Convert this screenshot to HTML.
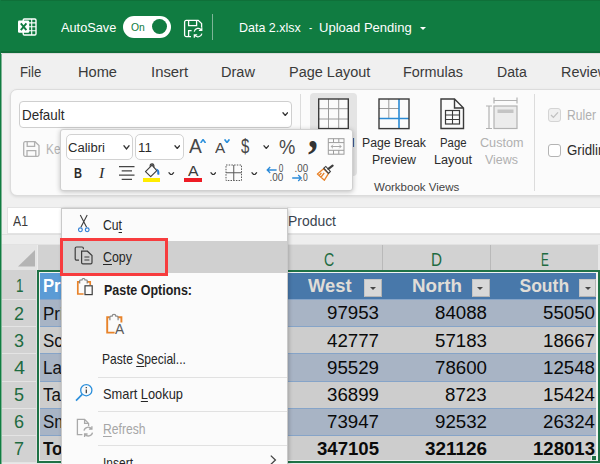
<!DOCTYPE html>
<html>
<head>
<meta charset="utf-8">
<title>Excel - Data 2.xlsx</title>
<style>
html,body{margin:0;padding:0;}
body{width:600px;height:464px;overflow:hidden;position:relative;background:#f0f0f0;font-family:"Liberation Sans",sans-serif;color:#333;}
.a{position:absolute;box-sizing:border-box;}
.t{position:absolute;white-space:nowrap;line-height:1;}
u{text-decoration-thickness:1px;text-underline-offset:1.5px;}
</style>
</head>
<body>
<div class="a" style="left:0px;top:0px;width:600px;height:52px;background:#107c41;"></div>
<div class="a" style="left:0px;top:0px;width:600px;height:1px;background:#0f7039;"></div>
<div class="a" style="left:0px;top:51px;width:600px;height:2px;background:#0f6d39;"></div>
<div class="a" style="left:0px;top:53px;width:600px;height:1px;background:#dcdcdc;"></div>
<div class="a" style="left:0px;top:0px;width:1px;height:464px;background:#107c41;"></div>
<div class="a" style="left:1px;top:54px;width:1px;height:410px;background:#7fb596;"></div>
<svg class="a" style="left:17px;top:17px" width="21" height="21" viewBox="0 0 21 21" fill="none"><rect x="6.200" y="2" width="12.800" height="16" rx="1.200" stroke="#fff" stroke-width="1.400"/>
<path d="M14.700 2 V18 M10 5.900 H19 M10 9.800 H19 M10 13.800 H19" stroke="#fff" stroke-width="1.100"/>
<rect x="1" y="3.600" width="11.200" height="12.200" rx="1.200" fill="#fff"/>
<path d="M3.800 6.400 L9.400 13.200 M9.400 6.400 L3.800 13.200" stroke="#107c41" stroke-width="1.900"/></svg>
<div class="t" style="left:60.70px;top:21px;font-size:13.50px;color:#fff;transform:scaleX(0.9446);transform-origin:0 0;">AutoSave</div>
<div class="a" style="left:122.7px;top:15.5px;width:48.3px;height:22.200000000000003px;background:#fff;border-radius:11.100px;"></div>
<div class="t" style="left:131.00px;top:22px;font-size:11.50px;color:#107c41;transform:scaleX(0.8996);transform-origin:0 0;">On</div>
<div class="a" style="left:151.6px;top:19.2px;width:15.200000000000017px;height:15.2px;background:#107c41;border-radius:50%;"></div>
<svg class="a" style="left:182.5px;top:19px" width="21" height="20" viewBox="0 0 21 20" fill="none"><g stroke="#fff" stroke-width="1.3"><path d="M8 17.6 H3.2 a1.6 1.6 0 0 1 -1.6 -1.6 V3 a1.6 1.6 0 0 1 1.6 -1.6 H15.2 l3.4 3.2 V8.5"/>
<path d="M5.6 1.6 V6.6 H13.6 V1.6"/><path d="M5.6 17.4 V11.6 H8.6"/>
<path d="M11.2 12.6 a4 4 0 0 1 7.3 -1.4 M18.8 8.6 v2.9 h-2.9" stroke-width="1.2"/>
<path d="M18.9 14.6 a4 4 0 0 1 -7.3 1.4 M11.3 18.8 v-2.9 h2.9" stroke-width="1.2"/></g></svg>
<div class="a" style="left:212px;top:13.5px;width:1px;height:26.0px;background:#7db598;"></div>
<div class="t" style="left:239.30px;top:21px;font-size:13.50px;color:#fff;transform:scaleX(0.9240);transform-origin:0 0;">Data 2.xlsx</div>
<div class="t" style="left:309.00px;top:21px;font-size:13.50px;color:#fff;transform:scaleX(0.7118);transform-origin:0 0;">-</div>
<div class="t" style="left:319.00px;top:21px;font-size:13.50px;color:#fff;transform:scaleX(0.9648);transform-origin:0 0;">Upload Pending</div>
<div class="a" style="left:420px;top:26.5px;border-left:3.6px solid transparent;border-right:3.6px solid transparent;border-top:3.8px solid #fff;"></div>
<div class="t" style="left:20.00px;top:64px;font-size:15.50px;color:#3a3a3a;transform:scaleX(0.8527);transform-origin:0 0;">File</div>
<div class="t" style="left:78.30px;top:64px;font-size:15.50px;color:#3a3a3a;transform:scaleX(0.9433);transform-origin:0 0;">Home</div>
<div class="t" style="left:150.80px;top:64px;font-size:15.50px;color:#3a3a3a;transform:scaleX(0.9596);transform-origin:0 0;">Insert</div>
<div class="t" style="left:221.00px;top:64px;font-size:15.50px;color:#3a3a3a;transform:scaleX(0.9388);transform-origin:0 0;">Draw</div>
<div class="t" style="left:288.70px;top:64px;font-size:15.50px;color:#3a3a3a;transform:scaleX(0.9340);transform-origin:0 0;">Page Layout</div>
<div class="t" style="left:403.30px;top:64px;font-size:15.50px;color:#3a3a3a;transform:scaleX(0.9288);transform-origin:0 0;">Formulas</div>
<div class="t" style="left:497.30px;top:64px;font-size:15.50px;color:#3a3a3a;transform:scaleX(0.9070);transform-origin:0 0;">Data</div>
<div class="t" style="left:561.30px;top:64px;font-size:15.50px;color:#3a3a3a;transform:scaleX(0.9280);transform-origin:0 0;">Review</div>
<div class="a" style="left:10px;top:89px;width:630px;height:107px;background:#fbfbfb;border:1px solid #dcdcdc;border-radius:7px;box-shadow:0 1px 3px rgba(0,0,0,.10);"></div>
<div class="a" style="left:19px;top:101px;width:272.5px;height:26.5px;background:#fff;border:1px solid #cfcfcf;border-radius:4px;"></div>
<div class="t" style="left:22.00px;top:108px;font-size:14.20px;color:#2a2a2a;transform:scaleX(0.9446);transform-origin:0 0;">Default</div>
<svg class="a" style="left:281.5px;top:112px" width="6.5" height="4" viewBox="0 0 6.5 4" fill="none"><path d="M0.6 0.4 L3.25 3.4 L5.9 0.4" stroke="#333" stroke-width="1.4"/></svg>
<svg class="a" style="left:22px;top:140px" width="19" height="18" viewBox="0 0 19 18" fill="none"><g stroke="#b0b0b0" stroke-width="1.3"><path d="M1.7 3.2 a1.5 1.5 0 0 1 1.5 -1.5 H13 L17 5.6 V14.8 a1.5 1.5 0 0 1 -1.5 1.5 H3.2 a1.5 1.5 0 0 1 -1.5 -1.5 Z"/>
<path d="M5.2 1.7 V6.4 H12.6 V1.7 M5 16.3 V10.6 H13.8 V16.3"/></g></svg>
<div class="t" style="left:45.50px;top:142px;font-size:14.20px;color:#b4b4b4;transform:scaleX(0.8349);transform-origin:0 0;">Ke</div>
<div class="a" style="left:300px;top:94px;width:1px;height:97px;background:#dcdcdc;"></div>
<div class="a" style="left:309.5px;top:93px;width:47.5px;height:83px;background:#e4e4e4;border-radius:4px;"></div>
<svg class="a" style="left:317px;top:97px" width="33" height="33" viewBox="0 0 33 33" fill="none"><rect x="1.7" y="2" width="29.6" height="29.6" fill="#fbfbfb"/><path d="M11.5 2 V31 M21.7 2 V31 M2 11.7 H31 M2 22 H31" stroke="#9a9a9a" stroke-width="1"/>
<rect x="1.7" y="2" width="29.6" height="29.6" stroke="#3b3b3b" stroke-width="1.4"/></svg>
<div class="t" style="left:312.50px;top:136px;font-size:13.25px;color:#2b2b2b;transform:scaleX(0.9719);transform-origin:0 0;">Normal</div>
<svg class="a" style="left:377px;top:97px" width="34" height="33" viewBox="0 0 34 33" fill="none"><path d="M11.8 2 V21.5 M2 11.5 H22" stroke="#9a9a9a" stroke-width="1"/>
<path d="M22 2 V31.5 M2 21.5 H32" stroke="#2a8ad4" stroke-width="1.6"/>
<rect x="2" y="2" width="30" height="29.6" stroke="#3b3b3b" stroke-width="1.4"/></svg>
<div class="t" style="left:361.50px;top:136px;font-size:13.25px;color:#2b2b2b;transform:scaleX(0.9241);transform-origin:0 0;">Page Break</div>
<div class="t" style="left:371.50px;top:153px;font-size:13.25px;color:#2b2b2b;transform:scaleX(0.9329);transform-origin:0 0;">Preview</div>
<svg class="a" style="left:439px;top:97px" width="27" height="33" viewBox="0 0 27 33" fill="none"><path d="M2 2 H15.5 L24.5 11 V31.5 H2 Z M15.5 2 V11 H24.5" stroke="#3b3b3b" stroke-width="1.4"/>
<rect x="6.5" y="13.5" width="14" height="13.5" stroke="#3b3b3b" stroke-width="1.2"/><path d="M6.5 18 H20.5 M6.5 22.5 H20.5 M13.5 13.5 V27" stroke="#3b3b3b" stroke-width="1.1"/></svg>
<div class="t" style="left:439.50px;top:136px;font-size:13.25px;color:#2b2b2b;transform:scaleX(0.8563);transform-origin:0 0;">Page</div>
<div class="t" style="left:434.00px;top:153px;font-size:13.25px;color:#2b2b2b;transform:scaleX(0.9552);transform-origin:0 0;">Layout</div>
<svg class="a" style="left:485px;top:96px" width="34" height="34" viewBox="0 0 34 34" fill="none"><g stroke="#b2b2b2" stroke-width="1.2"><path d="M9 1.5 V7.5 M32 1.5 V7.5 M9 4.5 H32 M1 10 H7 M1 32.5 H7 M4 10 V32.5"/>
<rect x="9" y="10" width="23" height="22.5" fill="#ececec"/></g><rect x="12.5" y="13.5" width="16" height="3.5" fill="#c4c4c4"/></svg>
<div class="t" style="left:479.50px;top:136px;font-size:13.25px;color:#b0b0b0;transform:scaleX(0.9528);transform-origin:0 0;">Custom</div>
<div class="t" style="left:485.00px;top:153px;font-size:13.25px;color:#b0b0b0;transform:scaleX(0.9400);transform-origin:0 0;">Views</div>
<div class="t" style="left:374.00px;top:182px;font-size:11.50px;color:#444;">Workbook Views</div>
<div class="a" style="left:534px;top:94px;width:1px;height:97px;background:#dcdcdc;"></div>
<div class="a" style="left:547.5px;top:108px;width:13.5px;height:13.5px;background:#f0f0f0;border:1px solid #d4d4d4;border-radius:3px;"></div>
<svg class="a" style="left:550px;top:111px" width="9" height="8" viewBox="0 0 9 8" fill="none"><path d="M1 4 L3.4 6.4 L8 1.4" stroke="#c0c0c0" stroke-width="1.3"/></svg>
<div class="t" style="left:567.00px;top:108px;font-size:14.20px;color:#b0b0b0;transform:scaleX(0.8547);transform-origin:0 0;">Ruler</div>
<div class="a" style="left:547.5px;top:143.5px;width:13.5px;height:13.0px;background:#fff;border:1px solid #b4b4b4;border-radius:3px;"></div>
<div class="t" style="left:567.00px;top:143px;font-size:14.20px;color:#2b2b2b;transform:scaleX(0.9369);transform-origin:0 0;">Gridlines</div>
<div class="a" style="left:7px;top:207px;width:263px;height:27px;background:#fff;border:1px solid #e3e3e3;"></div>
<div class="a" style="left:287px;top:207px;width:323px;height:27px;background:#fff;border:1px solid #e3e3e3;"></div>
<div class="t" style="left:13.00px;top:214px;font-size:14.20px;color:#3a3a3a;transform:scaleX(0.8637);transform-origin:0 0;">A1</div>
<div class="t" style="left:288.00px;top:214px;font-size:14.20px;color:#3a4450;transform:scaleX(0.9808);transform-origin:0 0;">Product</div>
<div class="a" style="left:2px;top:234px;width:598px;height:11px;background:#eeeeee;"></div>
<div class="a" style="left:2px;top:234px;width:598px;height:1px;background:#e0e0e0;"></div>
<div class="a" style="left:2px;top:244px;width:598px;height:1px;background:#e2e2e2;"></div>
<div class="a" style="left:2px;top:245px;width:598px;height:26px;background:#e4e4e4;"></div>
<svg class="a" style="left:17px;top:249px" width="19" height="18" viewBox="0 0 19 18" fill="none"><path d="M18 1 V17.500 H1 Z" fill="#b4b4b4"/></svg>
<div class="a" style="left:38px;top:245px;width:560px;height:25px;background:#d2d2d2;"></div>
<div class="a" style="left:37px;top:245px;width:1px;height:25px;background:#ececec;"></div>
<div class="a" style="left:598px;top:245px;width:2px;height:25px;background:#e8e8e8;"></div>
<div class="a" style="left:168.5px;top:245px;width:1.0px;height:25px;background:#b9b9b9;"></div>
<div class="a" style="left:275.5px;top:245px;width:1.0px;height:25px;background:#b9b9b9;"></div>
<div class="a" style="left:382.0px;top:245px;width:1.0px;height:25px;background:#b9b9b9;"></div>
<div class="a" style="left:489.5px;top:245px;width:1.0px;height:25px;background:#b9b9b9;"></div>
<div class="t" style="left:324.30px;top:252px;font-size:17.50px;color:#1e6b41;transform:scaleX(0.8073);transform-origin:0 0;">C</div>
<div class="t" style="left:431.00px;top:252px;font-size:17.50px;color:#1e6b41;transform:scaleX(0.8706);transform-origin:0 0;">D</div>
<div class="t" style="left:540.80px;top:252px;font-size:17.50px;color:#1e6b41;transform:scaleX(0.6682);transform-origin:0 0;">E</div>
<div class="a" style="left:2px;top:270px;width:35px;height:194px;background:#d2d2d2;"></div>
<div class="a" style="left:2px;top:298.5px;width:35px;height:1.0px;background:#e4e4e4;"></div>
<div class="a" style="left:2px;top:326.0px;width:35px;height:1.0px;background:#e4e4e4;"></div>
<div class="a" style="left:2px;top:353.0px;width:35px;height:1.0px;background:#e4e4e4;"></div>
<div class="a" style="left:2px;top:380.5px;width:35px;height:1.0px;background:#e4e4e4;"></div>
<div class="a" style="left:2px;top:407.5px;width:35px;height:1.0px;background:#e4e4e4;"></div>
<div class="a" style="left:2px;top:434.5px;width:35px;height:1.0px;background:#e4e4e4;"></div>
<div class="a" style="left:2px;top:461.5px;width:35px;height:1.0px;background:#e4e4e4;"></div>
<div class="a" style="left:36px;top:270px;width:1px;height:194px;background:#e0e0e0;"></div>
<div class="t" style="left:15.70px;top:278px;font-size:17.50px;color:#1e6b41;transform:scaleX(0.7708);transform-origin:0 0;">1</div>
<div class="t" style="left:14.00px;top:306px;font-size:17.50px;color:#1e6b41;transform:scaleX(1.0277);transform-origin:0 0;">2</div>
<div class="t" style="left:14.00px;top:333px;font-size:17.50px;color:#1e6b41;transform:scaleX(1.0277);transform-origin:0 0;">3</div>
<div class="t" style="left:13.50px;top:360px;font-size:17.50px;color:#1e6b41;transform:scaleX(1.1305);transform-origin:0 0;">4</div>
<div class="t" style="left:14.00px;top:387px;font-size:17.50px;color:#1e6b41;transform:scaleX(1.0277);transform-origin:0 0;">5</div>
<div class="t" style="left:14.00px;top:414px;font-size:17.50px;color:#1e6b41;transform:scaleX(1.0277);transform-origin:0 0;">6</div>
<div class="t" style="left:14.00px;top:441px;font-size:17.50px;color:#1e6b41;transform:scaleX(1.0277);transform-origin:0 0;">7</div>
<div class="a" style="left:39px;top:272px;width:558.5px;height:189px;background:#f2f2f2;"></div>
<div class="a" style="left:40px;top:273px;width:556px;height:26px;background:#4878aa;"></div>
<div class="a" style="left:40px;top:299px;width:556px;height:27.5px;background:#a8b4c5;"></div>
<div class="a" style="left:40px;top:326.5px;width:556px;height:27.0px;background:#cdcdcd;"></div>
<div class="a" style="left:40px;top:353.5px;width:556px;height:27.5px;background:#a8b4c5;"></div>
<div class="a" style="left:40px;top:381px;width:556px;height:27px;background:#cdcdcd;"></div>
<div class="a" style="left:40px;top:408px;width:556px;height:27px;background:#a8b4c5;"></div>
<div class="a" style="left:40px;top:435px;width:556px;height:25px;background:#cdcdcd;"></div>
<div class="a" style="left:40px;top:298.5px;width:556px;height:1.0px;background:#86a4c8;"></div>
<div class="a" style="left:40px;top:326.0px;width:556px;height:1.0px;background:#86a4c8;"></div>
<div class="a" style="left:40px;top:353.0px;width:556px;height:1.0px;background:#86a4c8;"></div>
<div class="a" style="left:40px;top:380.5px;width:556px;height:1.0px;background:#86a4c8;"></div>
<div class="a" style="left:40px;top:407.5px;width:556px;height:1.0px;background:#86a4c8;"></div>
<div class="a" style="left:40px;top:434.5px;width:556px;height:1.0px;background:#86a4c8;"></div>
<div class="a" style="left:37px;top:270px;width:562.5px;height:2px;background:#1f7246;"></div>
<div class="a" style="left:37px;top:270px;width:2px;height:194px;background:#1f7246;"></div>
<div class="a" style="left:597.5px;top:270px;width:2.0px;height:193px;background:#1f7246;"></div>
<div class="a" style="left:37px;top:460.6px;width:562.5px;height:2.3999999999999773px;background:#1f7246;"></div>
<div class="a" style="left:2px;top:463px;width:598px;height:1px;background:#e8e8e8;"></div>
<div class="a" style="left:590.5px;top:455px;width:6.0px;height:5.600000000000023px;background:#1f7246;border:1px solid #eee;"></div>
<div class="a" style="left:40px;top:273px;width:129px;height:26px;background:#5b9bd5;"></div>
<div class="t" style="left:43.00px;top:278px;font-size:17.50px;color:#fff;font-weight:bold;transform:scaleX(0.9500);transform-origin:0 0;">Product</div>
<div class="t" style="left:42.60px;top:306px;font-size:17.50px;color:#111;transform:scaleX(0.9700);transform-origin:0 0;">Printer</div>
<div class="t" style="left:42.60px;top:333px;font-size:17.50px;color:#111;transform:scaleX(0.9700);transform-origin:0 0;">Scanner</div>
<div class="t" style="left:42.60px;top:360px;font-size:17.50px;color:#111;transform:scaleX(0.9700);transform-origin:0 0;">Laptop</div>
<div class="t" style="left:42.60px;top:387px;font-size:17.50px;color:#111;transform:scaleX(0.9700);transform-origin:0 0;">Tablet</div>
<div class="t" style="left:42.60px;top:414px;font-size:17.50px;color:#111;transform:scaleX(0.9700);transform-origin:0 0;">Smartphone</div>
<div class="t" style="left:42.60px;top:441px;font-size:17.50px;color:#111;font-weight:bold;transform:scaleX(0.9700);transform-origin:0 0;">Total</div>
<div class="t" style="left:308.00px;top:278px;font-size:17.50px;color:#e0ddd7;font-weight:bold;transform:scaleX(1.0484);transform-origin:0 0;">West</div>
<div class="t" style="left:411.50px;top:278px;font-size:17.50px;color:#e0ddd7;font-weight:bold;transform:scaleX(1.0717);transform-origin:0 0;">North</div>
<div class="t" style="left:519.50px;top:278px;font-size:17.50px;color:#e0ddd7;font-weight:bold;">South</div>
<div class="a" style="left:364px;top:279px;width:18px;height:18px;background:#d8d8d8;border:1px solid #b4b4b4;border-left-color:#c6c6c6;border-top-color:#c6c6c6;"></div>
<div class="a" style="left:369.5px;top:287px;border-left:3.5px solid transparent;border-right:3.5px solid transparent;border-top:3.800px solid #474747;"></div>
<div class="a" style="left:471.5px;top:279px;width:18.0px;height:18px;background:#d8d8d8;border:1px solid #b4b4b4;border-left-color:#c6c6c6;border-top-color:#c6c6c6;"></div>
<div class="a" style="left:477.0px;top:287px;border-left:3.5px solid transparent;border-right:3.5px solid transparent;border-top:3.800px solid #474747;"></div>
<div class="a" style="left:579px;top:279px;width:17px;height:18px;background:#d8d8d8;border:1px solid #b4b4b4;border-left-color:#c6c6c6;border-top-color:#c6c6c6;"></div>
<div class="a" style="left:584.5px;top:287px;border-left:3.5px solid transparent;border-right:3.5px solid transparent;border-top:3.800px solid #474747;"></div>
<div class="t" style="left:327.00px;top:305px;font-size:17.50px;color:#0a0a0a;transform:scaleX(1.0685);transform-origin:0 0;">97953</div>
<div class="t" style="left:434.80px;top:305px;font-size:17.50px;color:#0a0a0a;transform:scaleX(1.0685);transform-origin:0 0;">84088</div>
<div class="t" style="left:542.50px;top:305px;font-size:17.50px;color:#0a0a0a;transform:scaleX(1.0685);transform-origin:0 0;">55050</div>
<div class="t" style="left:327.00px;top:333px;font-size:17.50px;color:#0a0a0a;transform:scaleX(1.0685);transform-origin:0 0;">42777</div>
<div class="t" style="left:434.80px;top:333px;font-size:17.50px;color:#0a0a0a;transform:scaleX(1.0685);transform-origin:0 0;">57183</div>
<div class="t" style="left:542.50px;top:333px;font-size:17.50px;color:#0a0a0a;transform:scaleX(1.0685);transform-origin:0 0;">18667</div>
<div class="t" style="left:327.00px;top:360px;font-size:17.50px;color:#0a0a0a;transform:scaleX(1.0685);transform-origin:0 0;">95529</div>
<div class="t" style="left:434.80px;top:360px;font-size:17.50px;color:#0a0a0a;transform:scaleX(1.0685);transform-origin:0 0;">78600</div>
<div class="t" style="left:542.50px;top:360px;font-size:17.50px;color:#0a0a0a;transform:scaleX(1.0685);transform-origin:0 0;">12548</div>
<div class="t" style="left:327.00px;top:387px;font-size:17.50px;color:#0a0a0a;transform:scaleX(1.0685);transform-origin:0 0;">36899</div>
<div class="t" style="left:445.30px;top:387px;font-size:17.50px;color:#0a0a0a;transform:scaleX(1.0661);transform-origin:0 0;">8723</div>
<div class="t" style="left:542.50px;top:387px;font-size:17.50px;color:#0a0a0a;transform:scaleX(1.0685);transform-origin:0 0;">15424</div>
<div class="t" style="left:327.00px;top:414px;font-size:17.50px;color:#0a0a0a;transform:scaleX(1.0685);transform-origin:0 0;">73947</div>
<div class="t" style="left:434.80px;top:414px;font-size:17.50px;color:#0a0a0a;transform:scaleX(1.0685);transform-origin:0 0;">92532</div>
<div class="t" style="left:542.50px;top:414px;font-size:17.50px;color:#0a0a0a;transform:scaleX(1.0685);transform-origin:0 0;">26324</div>
<div class="t" style="left:317.00px;top:441px;font-size:17.50px;color:#0a0a0a;font-weight:bold;transform:scaleX(1.0617);transform-origin:0 0;">347105</div>
<div class="t" style="left:424.80px;top:441px;font-size:17.50px;color:#0a0a0a;font-weight:bold;transform:scaleX(1.0795);transform-origin:0 0;">321126</div>
<div class="t" style="left:532.50px;top:441px;font-size:17.50px;color:#0a0a0a;font-weight:bold;transform:scaleX(1.0617);transform-origin:0 0;">128013</div>
<div class="a" style="left:60px;top:129px;width:293px;height:61.5px;background:#fcfcfc;border:1px solid #d0d0d0;border-radius:3px;box-shadow:0 1px 5px rgba(0,0,0,.24);"></div>
<div class="a" style="left:65.5px;top:134px;width:67.69999999999999px;height:25.69999999999999px;background:#fff;border:1px solid #d2d2d2;border-radius:5px;"></div>
<div class="t" style="left:68.00px;top:141px;font-size:13.25px;color:#2a2a2a;transform:scaleX(0.9853);transform-origin:0 0;">Calibri</div>
<svg class="a" style="left:123px;top:145px" width="7" height="4.5" viewBox="0 0 7 4.5" fill="none"><path d="M0.6 0.4 L3.5 3.9 L6.4 0.4" stroke="#333" stroke-width="1.4"/></svg>
<div class="a" style="left:134.6px;top:134px;width:49.099999999999994px;height:25.69999999999999px;background:#fff;border:1px solid #d2d2d2;border-radius:5px;"></div>
<div class="t" style="left:138.00px;top:141px;font-size:13.25px;color:#2a2a2a;">11</div>
<svg class="a" style="left:173.5px;top:144.5px" width="6.5" height="4.0" viewBox="0 0 6.5 4.0" fill="none"><path d="M0.6 0.4 L3.25 3.4 L5.9 0.4" stroke="#333" stroke-width="1.4"/></svg>
<div class="t" style="left:189.20px;top:136px;font-size:20.00px;color:#474747;transform:scaleX(0.9595);transform-origin:0 0;">A</div>
<svg class="a" style="left:199.7px;top:138.6px" width="6.100000000000023" height="4.400000000000006" viewBox="0 0 6.100000000000023 4.400000000000006" fill="none"><path d="M0.6 4.000000000000005 L3.0500000000000114 0.6 L5.500000000000023 4.000000000000005" stroke="#2b90dc" stroke-width="1.6"/></svg>
<div class="t" style="left:215.30px;top:141px;font-size:14.75px;color:#474747;transform:scaleX(1.0368);transform-origin:0 0;">A</div>
<svg class="a" style="left:224.2px;top:139px" width="6.0" height="4.199999999999989" viewBox="0 0 6.0 4.199999999999989" fill="none"><path d="M0.6 0.4 L3.0 3.5999999999999885 L5.4 0.4" stroke="#2b90dc" stroke-width="1.6"/></svg>
<div class="t" style="left:241.00px;top:135px;font-size:21.00px;color:#474747;transform:scaleX(0.7109);transform-origin:0 0;">$</div>
<svg class="a" style="left:262.5px;top:145px" width="6.5" height="4" viewBox="0 0 6.5 4" fill="none"><path d="M0.6 0.4 L3.25 3.4 L5.9 0.4" stroke="#333" stroke-width="1.3"/></svg>
<div class="t" style="left:279.20px;top:137px;font-size:20.50px;color:#484848;transform:scaleX(0.8944);transform-origin:0 0;">%</div>
<div class="t" style="left:308.00px;top:112px;font-size:44.00px;color:#333;font-weight:bold;font-family:'Liberation Serif',serif;transform:scaleX(0.9091);transform-origin:0 0;">,</div>
<svg class="a" style="left:327px;top:137px" width="19" height="19" viewBox="0 0 19 19" fill="none"><g stroke="#9c9c9c" stroke-width="1"><rect x="1.300" y="1.700" width="15.700" height="15.500"/><path d="M1.300 5.600 H17 M1.300 13.300 H17 M6.500 1.700 V5.600 M11.800 1.700 V5.600 M6.500 13.300 V17.200 M11.800 13.300 V17.200"/>
<path d="M4.200 9.500 H14.100 M6 7.700 L4.200 9.500 L6 11.300 M12.300 7.700 L14.100 9.500 L12.300 11.300" stroke="#a8a8a8"/></g></svg>
<div class="t" style="left:74.00px;top:166px;font-size:14.20px;color:#2b2b2b;font-weight:bold;transform:scaleX(0.7803);transform-origin:0 0;">B</div>
<div class="t" style="left:99.06px;top:166px;font-size:14.20px;color:#2b2b2b;font-style:italic;font-family:'Liberation Serif',serif;transform:scaleX(1.1223);transform-origin:0 0;">I</div>
<svg class="a" style="left:118px;top:165px" width="18" height="16" viewBox="0 0 18 16" fill="none"><path d="M1 1.6 H16.5 M3.7 5.85 H14 M1 10.1 H16.5 M3.7 14.35 H14" stroke="#444" stroke-width="1.1"/></svg>
<svg class="a" style="left:143px;top:163px" width="19" height="15" viewBox="0 0 19 15" fill="none"><g stroke="#3e3e3e" stroke-width="1.15" stroke-linejoin="round"><path d="M2.500 8.700 L9 2.200 L13.800 7.600 L7.700 13.600 Z"/><path d="M7.300 3.900 Q6.600 0.900 9.200 0.900 Q11.200 1.100 10.900 4.300"/></g>
<path d="M13.200 5.600 Q16.800 6.400 16.400 11.400 Q15.300 12.400 14.300 11.200 Q14.800 8.400 13.200 5.600 Z" fill="#2b7cd3"/></svg>
<div class="a" style="left:143px;top:178px;width:17px;height:4px;background:#ffec00;"></div>
<svg class="a" style="left:168px;top:171.5px" width="6.5" height="3.8000000000000114" viewBox="0 0 6.5 3.8000000000000114" fill="none"><path d="M0.6 0.4 L3.25 3.2000000000000113 L5.9 0.4" stroke="#333" stroke-width="1.3"/></svg>
<div class="t" style="left:188.00px;top:163px;font-size:15.50px;color:#3a3a3a;transform:scaleX(1.0156);transform-origin:0 0;">A</div>
<div class="a" style="left:184px;top:178px;width:18px;height:4px;background:#ee1c25;"></div>
<svg class="a" style="left:209.5px;top:171.5px" width="6.5" height="3.8000000000000114" viewBox="0 0 6.5 3.8000000000000114" fill="none"><path d="M0.6 0.4 L3.25 3.2000000000000113 L5.9 0.4" stroke="#333" stroke-width="1.3"/></svg>
<svg class="a" style="left:225px;top:164px" width="18" height="18" viewBox="0 0 18 18" fill="none"><rect x="1" y="1" width="15.500" height="15.500" stroke="#5a5a5a" stroke-width="1" stroke-dasharray="1.500 1.200"/><path d="M8.750 1 V16.500 M1 8.750 H16.500" stroke="#5a5a5a" stroke-width="1"/></svg>
<svg class="a" style="left:251px;top:171.5px" width="6.5" height="3.8000000000000114" viewBox="0 0 6.5 3.8000000000000114" fill="none"><path d="M0.6 0.4 L3.25 3.2000000000000113 L5.9 0.4" stroke="#333" stroke-width="1.3"/></svg>
<svg class="a" style="left:266px;top:163px" width="19" height="20" viewBox="0 0 19 20" fill="none"><path d="M1.200 7 H10.600 M4.200 4 L1.200 7 L4.200 10" stroke="#2b8ad8" stroke-width="1.300"/>
<text x="12.800" y="9" font-size="11" textLength="4.600" lengthAdjust="spacingAndGlyphs" font-family="Liberation Sans, sans-serif" fill="#505050">0</text>
<text x="3.600" y="18.200" font-size="11" textLength="13.800" lengthAdjust="spacingAndGlyphs" font-family="Liberation Sans, sans-serif" fill="#505050">.00</text></svg>
<svg class="a" style="left:291px;top:163px" width="19" height="20" viewBox="0 0 19 20" fill="none"><text x="3.600" y="9" font-size="11" textLength="13.600" lengthAdjust="spacingAndGlyphs" font-family="Liberation Sans, sans-serif" fill="#505050">.00</text>
<path d="M1.200 15 H10.200 M7.200 12 L10.200 15 L7.200 18" stroke="#2b8ad8" stroke-width="1.300"/>
<text x="9.600" y="18.200" font-size="11" textLength="7.200" lengthAdjust="spacingAndGlyphs" font-family="Liberation Sans, sans-serif" fill="#505050">.0</text></svg>
<svg class="a" style="left:316px;top:164px" width="19" height="18" viewBox="0 0 19 18" fill="none"><g stroke="#e8832a" stroke-width="1.300" stroke-linejoin="round"><path d="M7.600 4.800 L1.400 10 L8.400 16.200 L12.400 9.600 Z M5 13.200 L8.200 9 M3.200 11.600 L5.400 8.800"/></g>
<path d="M7.800 4.200 L9.800 2.400 L14.400 7.400 L12.600 9.400 Z" stroke="#3e3e3e" stroke-width="1.100" fill="#fcfcfc"/><path d="M12.400 4.800 L16.600 1.600" stroke="#3e3e3e" stroke-width="2.200" stroke-linecap="round"/></svg>
<div class="a" style="left:61px;top:208px;width:226.5px;height:262px;background:#fbfbfb;border:1px solid #c9c9c9;box-shadow:1px 1px 4px rgba(0,0,0,.22);"></div>
<div class="a" style="left:62px;top:241px;width:224.5px;height:32px;background:#d0d0d0;"></div>
<div class="a" style="left:60px;top:238px;width:108px;height:38px;border:3px solid #f73c3e;"></div>
<svg class="a" style="left:76px;top:214px" width="15" height="19" viewBox="0 0 15 19" fill="none"><path d="M4.300 1 L10.600 13.200 M11.200 1 L4.900 13.200" stroke="#3e3e3e" stroke-width="1.100"/>
<circle cx="4.400" cy="15.800" r="1.900" stroke="#2b7cd3" stroke-width="1.150"/><circle cx="11.200" cy="15.800" r="1.900" stroke="#2b7cd3" stroke-width="1.150"/></svg>
<div class="t" style="left:102.50px;top:218px;font-size:14.20px;color:#262626;transform:scaleX(0.8599);transform-origin:0 0;">Cu<u>t</u></div>
<svg class="a" style="left:74px;top:246px" width="20" height="19" viewBox="0 0 20 19" fill="none"><g stroke="#3e3e3e" stroke-width="1.2"><path d="M5 14.2 H2.600 a1.400 1.400 0 0 1 -1.400 -1.400 V2.400 a1.400 1.400 0 0 1 1.400 -1.400 H8 a1.400 1.400 0 0 1 1.400 1.400 V3.200"/>
<path d="M7.600 5.200 H13.400 L18 9.600 V16.600 a1.300 1.300 0 0 1 -1.300 1.300 H8.900 a1.300 1.300 0 0 1 -1.300 -1.300 Z" fill="#d1d1d1"/>
<path d="M10.400 11 H15.400 M10.400 14 H15.400"/></g></svg>
<div class="t" style="left:102.50px;top:250px;font-size:14.20px;color:#262626;transform:scaleX(0.8748);transform-origin:0 0;"><u>C</u>opy</div>
<svg class="a" style="left:76px;top:277px" width="18" height="19" viewBox="0 0 18 19" fill="none"><path d="M7.600 17 H1.800 V4.800 H3.600 M11.200 4.800 H14.200 V8" stroke="#e8832a" stroke-width="1.700"/>
<path d="M3.700 6.400 V3.800 a0.800 0.800 0 0 1 0.800 -0.800 H6 a1.500 1.500 0 0 1 3 0 H10.400 a0.800 0.800 0 0 1 0.800 0.800 V6.400" stroke="#7a7a7a" stroke-width="1.100"/>
<rect x="9" y="8.800" width="7.200" height="8.800" stroke="#3e3e3e" stroke-width="1.200"/></svg>
<div class="t" style="left:103.50px;top:283px;font-size:14.00px;color:#1f1f1f;font-weight:bold;transform:scaleX(0.8908);transform-origin:0 0;">Paste Options:</div>
<svg class="a" style="left:104px;top:313px" width="22" height="23" viewBox="0 0 22 23" fill="none"><path d="M10.600 19.600 H3.200 V4.200 H5.800 M13.800 4.200 H17.400 V9.600" stroke="#e8832a" stroke-width="1.900"/>
<path d="M5.900 7.200 V4.200 a1 1 0 0 1 1 -1 H8.200 a1.800 1.800 0 0 1 3.600 0 H13.100 a1 1 0 0 1 1 1 V7.200" stroke="#8a8a8a" stroke-width="1.200"/>
<text x="11" y="20.700" font-size="13.800" font-family="Liberation Sans, sans-serif" fill="#5a5a5a">A</text></svg>
<div class="t" style="left:102.40px;top:352px;font-size:14.20px;color:#262626;transform:scaleX(0.8503);transform-origin:0 0;">Paste <u>S</u>pecial...</div>
<div class="a" style="left:97.5px;top:377px;width:189.0px;height:1px;background:#e1e1e1;"></div>
<svg class="a" style="left:75px;top:383px" width="19" height="19" viewBox="0 0 19 19" fill="none"><circle cx="11.300" cy="7.200" r="5.600" stroke="#2b8fdb" stroke-width="1.300"/><path d="M7.200 11.400 L1 17.600" stroke="#2b8fdb" stroke-width="1.600"/>
<path d="M11.300 6.600 V10.200 M11.300 4 V5.200" stroke="#444" stroke-width="1.300"/></svg>
<div class="t" style="left:102.50px;top:387px;font-size:14.20px;color:#262626;transform:scaleX(0.9050);transform-origin:0 0;">Smart <u>L</u>ookup</div>
<div class="a" style="left:97.5px;top:411px;width:189.0px;height:1px;background:#e1e1e1;"></div>
<svg class="a" style="left:76px;top:418px" width="18" height="20" viewBox="0 0 18 20" fill="none"><g stroke="#a9a9a9" stroke-width="1.300"><path d="M6.400 16.600 H1.400 V1.400 H8.600 L12.600 5.400 V8 M8.600 1.400 V5.400 H12.600"/>
<path d="M8 12.600 a4.200 4.200 0 0 1 7.600 -1.500 M15.900 8.200 v3 h-3 M16.500 14.600 a4.200 4.200 0 0 1 -7.600 1.500 M8.600 19 v-3 h3"/></g></svg>
<div class="t" style="left:102.50px;top:422px;font-size:14.20px;color:#a6a6a6;transform:scaleX(0.8548);transform-origin:0 0;"><u>R</u>efresh</div>
<div class="a" style="left:97.5px;top:445px;width:189.0px;height:1px;background:#e1e1e1;"></div>
<div class="t" style="left:102.50px;top:456px;font-size:14.20px;color:#262626;transform:scaleX(0.8447);transform-origin:0 0;">Insert</div>
<svg class="a" style="left:270px;top:455px" width="7" height="10" viewBox="0 0 7 10" fill="none"><path d="M0.8 0.6 L5.400 5 L0.8 9.400" stroke="#444" stroke-width="1.300"/></svg>
</body>
</html>
